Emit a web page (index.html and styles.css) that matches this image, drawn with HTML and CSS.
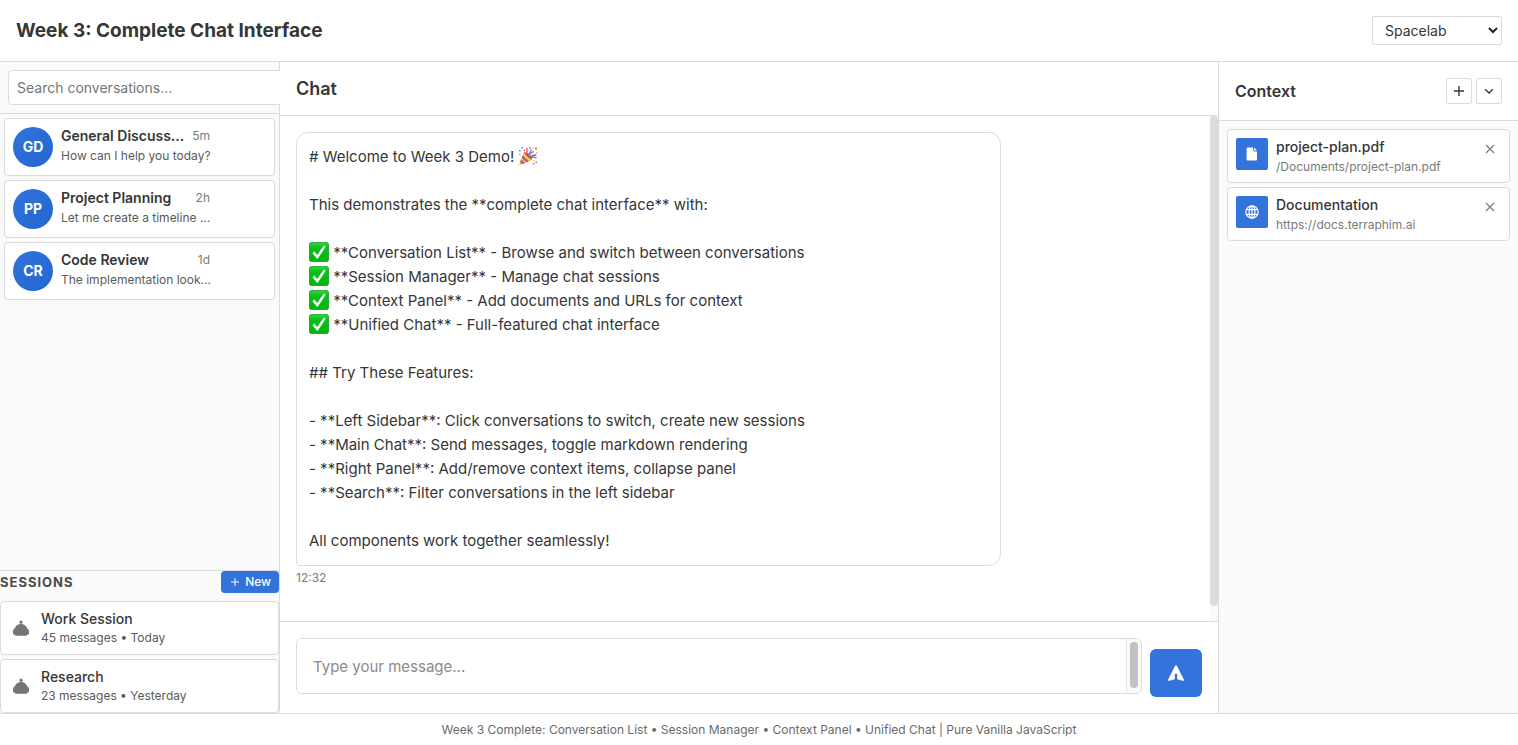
FILE: index.html
```html
<!DOCTYPE html>
<html lang="en">
<head>
<meta charset="utf-8">
<meta name="viewport" content="width=device-width, initial-scale=1">
<title>Week 3: Complete Chat Interface</title>
<link rel="stylesheet" href="styles.css">
</head>
<body>
<svg class="defs" aria-hidden="true">
  <defs>
    <linearGradient id="check-bg" x1="0" y1="0" x2="0" y2="1"><stop offset="0" stop-color="#3fd348"/><stop offset=".25" stop-color="#04c614"/><stop offset="1" stop-color="#02b20e"/></linearGradient>
    <symbol id="check" viewBox="0 0 20 20">
      <rect x=".4" y=".4" width="19.2" height="19.2" rx="2.4" fill="url(#check-bg)" stroke="#0a9a1a" stroke-width=".8"/>
      <path d="M3.4 11.2 5.4 9.6 8.2 13 14.6 3.8 16.8 4.6 9 16.4H7.8z" fill="#fff"/>
    </symbol>
    <symbol id="robot" viewBox="0 0 18 16">
      <path d="M8.300 4V3H7.300V1.500h1V.6h1.500v.9h1V3h-1v1c2.600.3 4.900 2.100 5.600 4.800.9.300 1.600 1.200 1.600 2.400v2.200c0 .7-.5 1.100-1.100 1.100h-.6c0 .8-.4 1.200-1 1.200H3.700c-.6 0-1-.4-1-1.200h-.6c-.7 0-1.100-.4-1.100-1.100v-2.200c0-1.200.6-2.100 1.500-2.400C3.200 6.100 5.600 4.300 8.300 4z" fill="currentColor"/>
      <circle cx="6" cy="10.300" r=".4" fill="#999"/><circle cx="12" cy="10.300" r=".4" fill="#999"/>
    </symbol>
    <symbol id="close" viewBox="0 0 10 10"><path d="m1 1 8 8M9 1 1 9" fill="none" stroke="currentColor" stroke-width="1.200"/></symbol>
  </defs>
</svg>

<div class="app">
  <header class="topbar">
    <h1 class="topbar-title">Week 3: Complete Chat Interface</h1>
    <div class="theme">
      <select class="theme-select" aria-label="Theme">
        <option>Spacelab</option>
      </select>
      <svg class="theme-arrow" viewBox="0 0 10 7" aria-hidden="true"><path d="m1 1 4 4 4-4" fill="none" stroke="#222" stroke-width="2"/></svg>
    </div>
  </header>

  <div class="workspace">
    <aside class="sidebar">
      <div class="search"><input class="search-input" type="search" placeholder="Search conversations..." aria-label="Search conversations"></div>
      <ul class="conversations">
        <li class="conversation">
          <span class="avatar">GD</span>
          <div class="conversation-body">
            <div class="conversation-top"><span class="conversation-title">General Discuss...</span><span class="conversation-time">5m</span></div>
            <div class="conversation-preview">How can I help you today?</div>
          </div>
        </li>
        <li class="conversation">
          <span class="avatar">PP</span>
          <div class="conversation-body">
            <div class="conversation-top"><span class="conversation-title">Project Planning</span><span class="conversation-time">2h</span></div>
            <div class="conversation-preview">Let me create a timeline ...</div>
          </div>
        </li>
        <li class="conversation">
          <span class="avatar">CR</span>
          <div class="conversation-body">
            <div class="conversation-top"><span class="conversation-title">Code Review</span><span class="conversation-time">1d</span></div>
            <div class="conversation-preview">The implementation look...</div>
          </div>
        </li>
      </ul>
      <section class="sessions">
        <div class="sessions-head">
          <h2 class="sessions-title">Sessions</h2>
          <button class="new-button" type="button">
            <svg class="new-icon" viewBox="0 0 8 8" aria-hidden="true"><path d="M4 0v8M0 4h8" stroke="currentColor" stroke-width="1"/></svg>New
          </button>
        </div>
        <ul class="session-list">
          <li class="session">
            <svg class="session-icon" aria-hidden="true"><use href="#robot"/></svg>
            <div><div class="item-title">Work Session</div><div class="item-meta">45 messages • Today</div></div>
          </li>
          <li class="session">
            <svg class="session-icon" aria-hidden="true"><use href="#robot"/></svg>
            <div><div class="item-title">Research</div><div class="item-meta">23 messages • Yesterday</div></div>
          </li>
        </ul>
      </section>
    </aside>

    <main class="chat">
      <div class="chat-head"><h2 class="chat-title">Chat</h2></div>
      <div class="chat-scroll">
        <div class="messages">
          <div class="bubble"># Welcome to Week 3 Demo! <svg class="emoji" viewBox="0 0 20 20" role="img" aria-label="Party popper"><path d="M1 19.400 5.800 6.200Q12 8 14 13.800z" fill="#f5b32e"/><path d="m5.800 6.200 2 .8 5 5.200 1.200 1.600-1.800.8Q7 12 5.200 8z" fill="#fbd66b"/><path d="m4.600 9.400 6.200 6-2 .8-5-4.600zM3 13.800l3.800 3.400-2 .8-2.600-2z" fill="#a24fd0"/><path d="M5.800 6.200Q10 6 12.200 9t1.800 4.800Q9 12 5.800 6.200z" fill="#b0652c"/><path d="M8 8q2-3 .6-6M11 10q2-4 5-4.400M12.600 12q3-2 6 .2" fill="none" stroke="#ef4e7b" stroke-width="1.300"/><path d="M10 8.400q3.600-2 3-5.400" fill="none" stroke="#4c9af0" stroke-width="1.300"/><path d="M13 11q2-2.400 5.400-2" fill="none" stroke="#4377e6" stroke-width="1.500"/><path d="M1 4h1.600v1.600H1zM3.400 1H5v1.600H3.400zM17.600 15.400h1.600V17h-1.600z" fill="#4c9af0"/><path d="M5.400 3.400H7V5H5.400zM11 1h1.600v1.600H11zM17 1.600h2v2h-2zM14.800 17h1.600v1.600h-1.600z" fill="#ef5d8f"/><path d="M1 7.600h1.600v1.600H1zM14.600 1.400h1.400v1.400h-1.400zM17.800 6h1.600v1.400h-1.600zM15.600 14h1.400v1.400h-1.400z" fill="#f3bf3c"/></svg>

This demonstrates the **complete chat interface** with:

<svg class="emoji" role="img" aria-label="Done"><use href="#check"/></svg> **Conversation List** - Browse and switch between conversations
<svg class="emoji" role="img" aria-label="Done"><use href="#check"/></svg> **Session Manager** - Manage chat sessions
<svg class="emoji" role="img" aria-label="Done"><use href="#check"/></svg> **Context Panel** - Add documents and URLs for context
<svg class="emoji" role="img" aria-label="Done"><use href="#check"/></svg> **Unified Chat** - Full-featured chat interface

## Try These Features:

- **Left Sidebar**: Click conversations to switch, create new sessions
- **Main Chat**: Send messages, toggle markdown rendering
- **Right Panel**: Add/remove context items, collapse panel
- **Search**: Filter conversations in the left sidebar

All components work together seamlessly!</div>
          <time class="message-time">12:32</time>
        </div>
        <div class="scrollbar" aria-hidden="true"><div class="scrollbar-thumb"></div></div>
      </div>
      <form class="composer">
        <div class="composer-box">
          <textarea class="composer-input" rows="1" placeholder="Type your message..." aria-label="Message"></textarea>
          <div class="composer-track" aria-hidden="true"><div class="composer-thumb"></div></div>
        </div>
        <button class="send-button" type="button" aria-label="Send">
          <svg class="send-icon" viewBox="0 0 16 16" aria-hidden="true"><path d="M8 .2Q8.700.2 9 .9L16 14.800Q16.200 16 14.800 15.800L9.200 14.200V9Q8 8 6.800 9v5.200L1.200 15.800Q-.2 16 0 14.800L7 .9Q7.300.2 8 .2z" fill="currentColor"/></svg>
        </button>
      </form>
    </main>

    <aside class="context">
      <div class="context-head">
        <h2 class="context-title">Context</h2>
        <div class="context-actions">
          <button class="icon-button" type="button" aria-label="Add context"><svg class="icon-10" viewBox="0 0 10 10" aria-hidden="true"><path d="M5 0v10M0 5h10" stroke="currentColor" stroke-width="1.400"/></svg></button>
          <button class="icon-button" type="button" aria-label="Collapse panel"><svg class="icon-10" viewBox="0 0 10 10" aria-hidden="true"><path d="m1.200 3.200 3.800 3.800 3.800-3.800" fill="none" stroke="currentColor" stroke-width="1.300"/></svg></button>
        </div>
      </div>
      <ul class="context-list">
        <li class="context-item">
          <span class="context-icon"><svg class="context-glyph" viewBox="0 0 14 14" aria-hidden="true"><path d="M2.800.4h5.400v3.200c0 .5.300.8.800.8h3v8c0 .7-.5 1.200-1.200 1.200h-8c-.8 0-1.200-.5-1.200-1.200V1.600c0-.7.500-1.200 1.200-1.200z" fill="currentColor"/><path d="M9.200.4 12 3.500H9.200z" fill="currentColor"/></svg></span>
          <div class="context-body"><div class="item-title">project-plan.pdf</div><div class="item-meta">/Documents/project-plan.pdf</div></div>
          <button class="remove-button" type="button" aria-label="Remove project-plan.pdf"><svg class="icon-10" aria-hidden="true"><use href="#close"/></svg></button>
        </li>
        <li class="context-item">
          <span class="context-icon"><svg class="context-glyph" viewBox="0 0 14 14" aria-hidden="true"><g fill="none" stroke="currentColor" stroke-width="1.200"><circle cx="7" cy="7" r="6.200"/><ellipse cx="7" cy="7" rx="2.900" ry="6.200"/><path d="M7 .8v12.400M1.400 4.700h11.200M1.400 9.300h11.200"/></g></svg></span>
          <div class="context-body"><div class="item-title">Documentation</div><div class="item-meta">https://docs.terraphim.ai</div></div>
          <button class="remove-button" type="button" aria-label="Remove Documentation"><svg class="icon-10" aria-hidden="true"><use href="#close"/></svg></button>
        </li>
      </ul>
    </aside>
  </div>

  <footer class="footer">Week 3 Complete: Conversation List • Session Manager • Context Panel • Unified Chat | Pure Vanilla JavaScript</footer>
</div>
</body>
</html>
```
FILE: styles.css
```css
:root {
  --line: #dbdbdb;
  --soft: #fafafa;
  --text: #363636;
  --muted: #7a7a7a;
  --primary: #3273dc;
}

* { box-sizing: border-box; }

body {
  margin: 0;
  color: var(--text);
  background: #fff;
  font: 14px/20px Inter, "Liberation Sans", sans-serif;
}

h1, h2, ul { margin: 0; padding: 0; }
ul { list-style: none; }
button, input, select, textarea { font: inherit; color: inherit; }
button { cursor: pointer; }
svg { flex: none; }
.defs { position: absolute; width: 0; height: 0; }

.app { display: flex; flex-direction: column; height: 100vh; }

.topbar {
  display: flex;
  align-items: center;
  justify-content: space-between;
  padding: 16px;
  border-bottom: 1px solid var(--line);
}
.topbar-title { font-size: 19px; line-height: 28px; font-weight: 700; }
.theme { position: relative; }
.theme-select {
  display: block;
  width: 130px;
  height: 29px;
  padding: 0 12px;
  appearance: none;
  border: 1px solid var(--line);
  border-radius: 2px;
  background: #fff;
}
.theme-arrow { position: absolute; right: 4px; top: 11px; width: 10px; height: 7px; pointer-events: none; }

.workspace { display: flex; flex: 1; min-height: 0; }

.sidebar {
  display: flex;
  flex: none;
  flex-direction: column;
  width: 280px;
  border-right: 1px solid var(--line);
  background: var(--soft);
}
.search { padding: 8px; border-bottom: 1px solid var(--line); }
/* The field keeps its padding outside its width and runs on under the chat column. */
.search-input {
  display: block;
  box-sizing: content-box;
  width: 100%;
  height: 17px;
  padding: 8px;
  appearance: none;
  border: 1px solid var(--line);
  border-radius: 4px;
  background: #fff;
}
::placeholder { color: #757575; opacity: 1; }

.conversations { display: flex; flex: 1; flex-direction: column; gap: 4px; padding: 4px; }
.conversation {
  display: flex;
  gap: 8px;
  padding: 8px 64px 8px 8px;
  border: 1px solid var(--line);
  border-radius: 4px;
  background: #fff;
}
.avatar {
  display: grid;
  flex: none;
  place-items: center;
  width: 40px;
  height: 40px;
  border-radius: 50%;
  background: linear-gradient(135deg, #3273dc, #2366d1);
  color: #fff;
  font-weight: 700;
}
.conversation-body { flex: 1; min-width: 0; white-space: nowrap; }
.conversation-top { display: flex; gap: 4px; align-items: center; justify-content: space-between; margin-bottom: 2px; line-height: 18px; }
.conversation-title { font-weight: 600; }
.conversation-time { color: var(--muted); font-size: 12px; }
.conversation-preview { color: #5a5a5a; font-size: 12px; line-height: 18px; }

.sessions { border-top: 1px solid var(--line); }
.sessions-head { display: flex; align-items: center; justify-content: space-between; margin-bottom: 8px; }
.sessions-title { color: #4a4a4a; font-size: 13px; line-height: 22px; font-weight: 700; letter-spacing: 1px; text-transform: uppercase; }
.new-button {
  display: flex;
  gap: 6px;
  align-items: center;
  height: 22px;
  padding: 0 8px 0 10px;
  border: 0;
  border-radius: 4px;
  background: var(--primary);
  color: #fff;
  font-size: 12px;
  font-weight: 500;
}
.new-icon { width: 8px; height: 8px; }
.session-list { display: flex; flex-direction: column; gap: 4px; }
.session {
  display: flex;
  gap: 11px;
  align-items: center;
  height: 54px;
  padding: 0 11px;
  border: 1px solid var(--line);
  border-radius: 4px;
  background: #fff;
}
.session-icon { width: 18px; height: 16px; color: #757575; }
.item-title { line-height: 20px; font-weight: 500; }
.item-meta { color: #5a5a5a; font-size: 12px; line-height: 18px; }

.chat { display: flex; flex: 1; flex-direction: column; min-width: 0; background: #fff; }
.chat-head { padding: 16px; border-bottom: 1px solid var(--line); }
.chat-title { font-size: 18px; line-height: 21px; font-weight: 600; }
.chat-scroll { display: flex; flex: 1; min-height: 0; }
.messages { flex: 1; min-width: 0; padding: 16px; overflow: hidden; }
.bubble {
  max-width: 705px;
  padding: 12px;
  border: 1px solid var(--line);
  border-radius: 12px 12px 12px 4px;
  font-size: 15px;
  line-height: 24px;
  white-space: pre-wrap;
}
.emoji { width: 20px; height: 20px; margin-top: -4px; vertical-align: middle; }
.message-time { display: block; padding-top: 4px; color: var(--muted); font-size: 12px; line-height: 16px; }
.scrollbar { width: 8px; background: var(--soft); }
.scrollbar-thumb { height: 97%; border-radius: 4px; background: var(--line); }

.composer { display: flex; gap: 8px; align-items: flex-end; padding: 16px; border-top: 1px solid var(--line); }
.composer-box {
  display: flex;
  flex: 1;
  height: 56px;
  margin-bottom: 3px;
  overflow: hidden;
  border: 1px solid var(--line);
  border-radius: 6px;
}
.composer-input { flex: 1; padding: 16px; border: 0; outline: 0; resize: none; background: #fff; font-size: 15px; line-height: 24px; overflow: hidden; }
.composer-input::placeholder { color: #8a8a8a; }
.composer-track { width: 15px; padding: 3px; border-left: 1px solid #e8e8e8; background: var(--soft); }
.composer-thumb { width: 8px; height: 46px; border-radius: 4px; background: #c1c1c1; }
.send-button {
  display: grid;
  place-items: center;
  width: 52px;
  height: 48px;
  padding: 0;
  border: 0;
  border-radius: 6px;
  background: var(--primary);
  color: #fff;
}
.send-icon { width: 16px; height: 16px; }

.context { flex: none; width: 300px; border-left: 1px solid var(--line); background: var(--soft); }
.context-head {
  display: flex;
  align-items: center;
  justify-content: space-between;
  padding: 16px;
  border-bottom: 1px solid var(--line);
  background: #fff;
}
.context-title { font-size: 16px; line-height: 24px; font-weight: 600; }
.context-actions { display: flex; gap: 4px; }
.icon-button {
  display: grid;
  place-items: center;
  width: 26px;
  height: 26px;
  padding: 0;
  border: 1px solid var(--line);
  border-radius: 2px;
  background: #fff;
}
.icon-10 { width: 10px; height: 10px; }
.context-list { display: flex; flex-direction: column; gap: 4px; padding: 8px; }
.context-item {
  display: flex;
  gap: 8px;
  align-items: flex-start;
  height: 54px;
  padding: 8px;
  border: 1px solid var(--line);
  border-radius: 4px;
  background: #fff;
}
.context-icon { display: grid; flex: none; place-items: center; width: 32px; height: 32px; border-radius: 2px; background: var(--primary); color: #fff; }
.context-glyph { width: 14px; height: 14px; }
.context-body { flex: 1; min-width: 0; }
.context-body .item-title { margin-bottom: 2px; line-height: 18px; }
.context-body .item-meta { color: var(--muted); }
.remove-button { display: grid; place-items: center; width: 22px; height: 22px; padding: 0; border: 0; background: none; color: var(--muted); }

.footer { padding: 8px; border-top: 1px solid var(--line); color: #6a6a6a; font-size: 12px; line-height: 15px; text-align: center; }
```
